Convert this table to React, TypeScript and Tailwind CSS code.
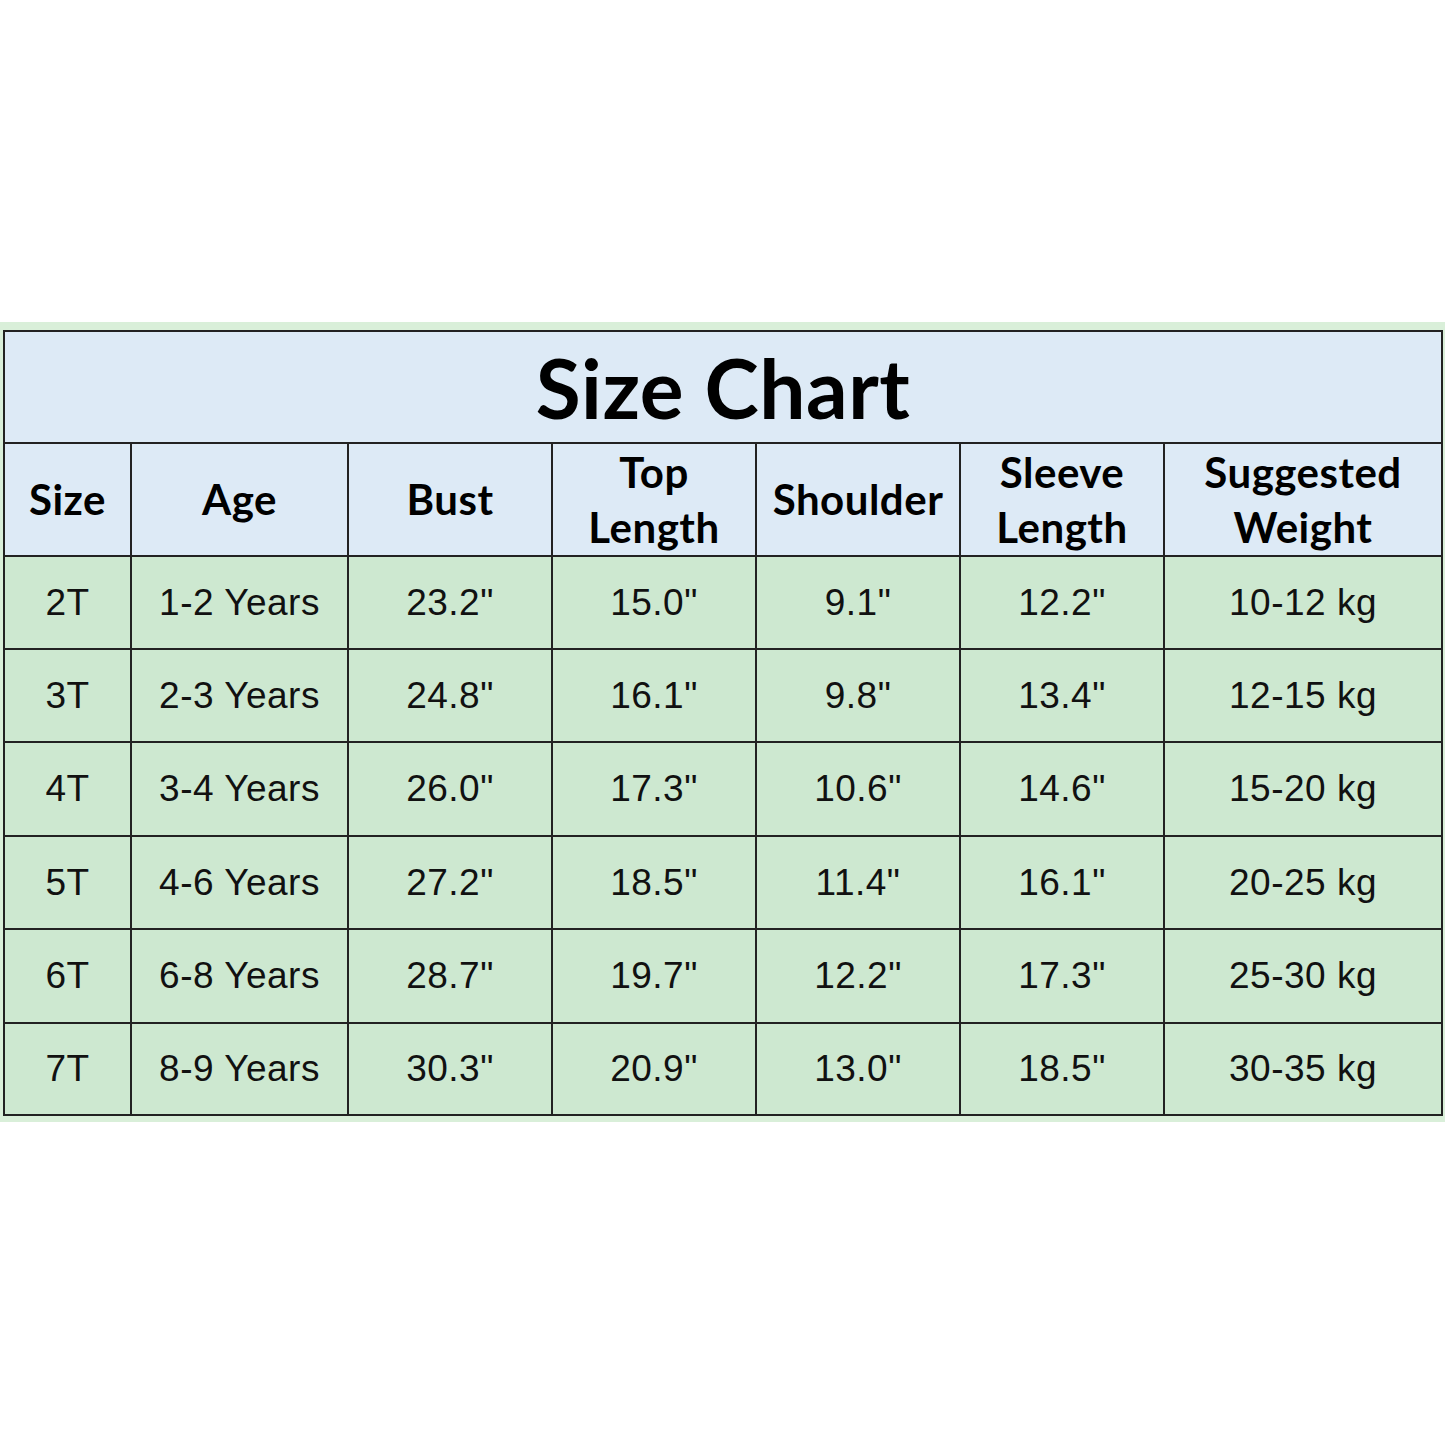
const headers = [
  ['Size'],
  ['Age'],
  ['Bust'],
  ['Top', 'Length'],
  ['Shoulder'],
  ['Sleeve', 'Length'],
  ['Suggested', 'Weight'],
];

const rows = [
  ['2T', '1-2 Years', '23.2"', '15.0"', '9.1"', '12.2"', '10-12 kg'],
  ['3T', '2-3 Years', '24.8"', '16.1"', '9.8"', '13.4"', '12-15 kg'],
  ['4T', '3-4 Years', '26.0"', '17.3"', '10.6"', '14.6"', '15-20 kg'],
  ['5T', '4-6 Years', '27.2"', '18.5"', '11.4"', '16.1"', '20-25 kg'],
  ['6T', '6-8 Years', '28.7"', '19.7"', '12.2"', '17.3"', '25-30 kg'],
  ['7T', '8-9 Years', '30.3"', '20.9"', '13.0"', '18.5"', '30-35 kg'],
];

const rowHeights = ['h-[91px]', 'h-[91px]', 'h-[92px]', 'h-[91px]', 'h-[92px]', 'h-[90px]'];

export default function App() {
  return (
    <div className="w-[1445px] h-[1445px] bg-white pt-[322px]">
      <div className="bg-[#d9efd9] pt-[8px] pb-[6px] pl-[3px]">
        <div className="w-[1440px] bg-[#222] p-[2px] grid grid-cols-[125px_215px_202px_202px_202px_202px_276px] gap-[2px]">
          <div
            className="col-span-7 h-[110px] bg-[#ddeaf6] flex items-center justify-center text-black font-bold text-[82px] leading-none tracking-[0.5px]"
            style={{ fontFamily: 'Lato, "Noto Sans", sans-serif' }}
          >
            Size Chart
          </div>
          {headers.map((h) => (
            <div
              key={h.join(' ')}
              className="h-[111px] bg-[#ddeaf6] flex flex-col items-center justify-center text-black font-bold text-[42px] leading-[55px] tracking-[0.5px]"
              style={{ fontFamily: 'Lato, "Noto Sans", sans-serif' }}
            >
              {h.map((line) => (
                <span key={line}>{line}</span>
              ))}
            </div>
          ))}
          {rows.map((r, i) =>
            r.map((cell, j) => (
              <div
                key={`${i}-${j}`}
                className={`${rowHeights[i]} bg-[#cde8d0] flex items-center justify-center text-[#111] text-[37px] tracking-[0.5px]`}
                style={{ fontFamily: '"Liberation Sans", Arial, sans-serif' }}
              >
                {cell}
              </div>
            ))
          )}
        </div>
      </div>
    </div>
  );
}
